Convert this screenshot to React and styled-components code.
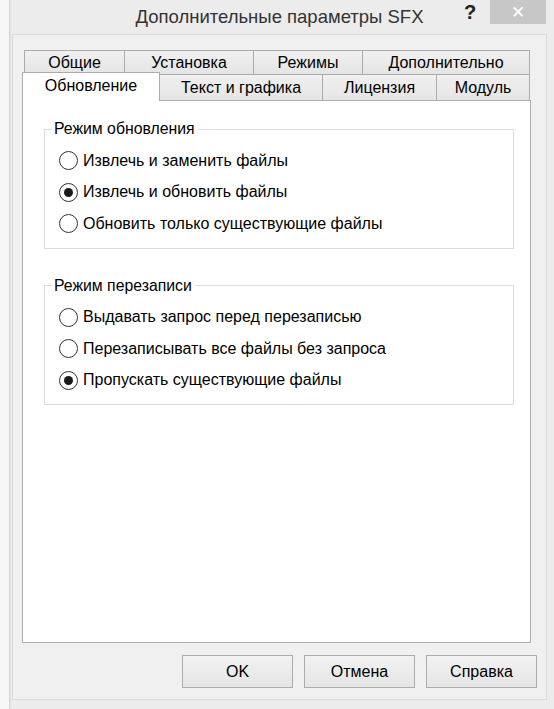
import React from "react";
import styled, { createGlobalStyle } from "styled-components";

const GlobalStyle = createGlobalStyle`
  html, body {
    margin: 0;
    padding: 0;
    background: #ffffff;
  }
  body {
    font-family: "Liberation Sans", Arial, sans-serif;
    font-size: 15px;
    color: #000;
  }
`;

const Screen = styled.div`
  display: flex;
  width: 554px;
  height: 709px;
  overflow: hidden;
`;

const BackWindow = styled.div`
  width: 9px;
  flex: none;
  background: #f7f7f7;
  border-right: 1px solid #d4d4d4;
`;

const Window = styled.div`
  flex: 1;
  display: flex;
  flex-direction: column;
  background: #ececec;
  border-left: 1px solid #e4e4e4;
`;

const TitleBar = styled.div`
  height: 34px;
  flex: none;
  display: flex;
  align-items: flex-start;
`;

const Title = styled.div`
  flex: 1;
  padding-top: 6px;
  padding-left: 90px;
  text-align: center;
  font-size: 18.5px;
  color: #333;
`;

const HelpMark = styled.div`
  width: 24px;
  padding-top: 1px;
  font-size: 20px;
  font-weight: bold;
  color: #222;
  text-align: center;
  margin-right: 8px;
`;

const CloseButton = styled.div`
  width: 56px;
  height: 24px;
  margin-right: 8px;
  background: #c7c7c7;
  display: flex;
  align-items: center;
  justify-content: center;
  color: #fff;
  font-size: 17px;
`;

const Client = styled.div`
  flex: 1;
  display: flex;
  flex-direction: column;
  margin: 0 7px 9px 1px;
  padding: 15px 15px 11px 9px;
  background: #f0f0f0;
  border: 1px solid #dadada;
`;

const TabStrip = styled.div`
  width: 509px;
  display: flex;
  flex-direction: column;
`;

const TabRow = styled.div`
  display: flex;
  height: ${(p) => p.$height}px;
  padding-left: ${(p) => p.$inset}px;
`;

const Tab = styled.div`
  width: ${(p) => p.$w}px;
  box-sizing: border-box;
  display: flex;
  align-items: center;
  justify-content: center;
  border: 1px solid #acacac;
  border-left-width: ${(p) => (p.$first ? 1 : 0)}px;
  border-bottom: none;
  background: linear-gradient(#f0f0f0, #e5e5e5);
  font-size: 16px;
  white-space: nowrap;
`;

const ActiveTab = styled(Tab)`
  position: relative;
  z-index: 2;
  margin-top: -2px;
  height: 29px;
  border-left-width: 1px;
  background: #fff;
  padding-bottom: 2px;
`;

const Panel = styled.div`
  flex: 1;
  width: 509px;
  box-sizing: border-box;
  background: #fff;
  border: 1px solid #acacac;
  padding: 19px 16px 0 21px;
  display: flex;
  flex-direction: column;
  gap: 28px;
`;

const Group = styled.fieldset`
  margin: 0;
  padding: 7px 0 8px 14px;
  border: 1px solid #dcdcdc;
  min-width: 0;
`;

const Legend = styled.legend`
  margin-left: -7px;
  padding: 0 3px 0 2px;
  font-size: 15.8px;
  line-height: 18px;
`;

const Option = styled.label`
  display: flex;
  align-items: center;
  height: 31.5px;
  gap: 5px;
  font-size: 16px;
`;

const RadioCircle = styled.span`
  width: 17px;
  height: 17px;
  flex: none;
  border-radius: 50%;
  border: 1px solid #333;
  background: #fff;
  display: flex;
  align-items: center;
  justify-content: center;

  &::after {
    content: "";
    width: 9px;
    height: 9px;
    border-radius: 50%;
    background: ${(p) => (p.$checked ? "#1a1a1a" : "transparent")};
  }
`;

const ButtonBar = styled.div`
  display: flex;
  justify-content: flex-end;
  gap: 11px;
  margin-top: 12px;
  margin-right: -6px;
`;

const Button = styled.div`
  width: 111px;
  height: 33px;
  box-sizing: border-box;
  display: flex;
  align-items: center;
  justify-content: center;
  border: 1px solid #acacac;
  background: linear-gradient(#f2f2f2, #e5e5e5);
  font-size: 16px;
`;

const Radio = ({ checked, children }) => (
  <Option>
    <RadioCircle $checked={checked} />
    {children}
  </Option>
);

const backTabs = [
  ["Общие", 101],
  ["Установка", 129],
  ["Режимы", 109],
  ["Дополнительно", 167],
];

const frontTabs = [
  ["Текст и графика", 163],
  ["Лицензия", 114],
  ["Модуль", 93],
];

export default function App() {
  return (
    <>
      <GlobalStyle />
      <Screen>
        <BackWindow />
        <Window>
          <TitleBar>
            <Title>Дополнительные параметры SFX</Title>
            <HelpMark>?</HelpMark>
            <CloseButton>✕</CloseButton>
          </TitleBar>
          <Client>
            <TabStrip>
              <TabRow $height={24} $inset={2}>
                {backTabs.map(([label, w], i) => (
                  <Tab key={label} $w={w} $first={i === 0}>
                    {label}
                  </Tab>
                ))}
              </TabRow>
              <TabRow $height={26} $inset={0}>
                <ActiveTab $w={138}>Обновление</ActiveTab>
                {frontTabs.map(([label, w]) => (
                  <Tab key={label} $w={w}>
                    {label}
                  </Tab>
                ))}
              </TabRow>
            </TabStrip>
            <Panel>
              <Group>
                <Legend>Режим обновления</Legend>
                <Radio>Извлечь и заменить файлы</Radio>
                <Radio checked>Извлечь и обновить файлы</Radio>
                <Radio>Обновить только существующие файлы</Radio>
              </Group>
              <Group>
                <Legend>Режим перезаписи</Legend>
                <Radio>Выдавать запрос перед перезаписью</Radio>
                <Radio>Перезаписывать все файлы без запроса</Radio>
                <Radio checked>Пропускать существующие файлы</Radio>
              </Group>
            </Panel>
            <ButtonBar>
              <Button>OK</Button>
              <Button>Отмена</Button>
              <Button>Справка</Button>
            </ButtonBar>
          </Client>
        </Window>
      </Screen>
    </>
  );
}
